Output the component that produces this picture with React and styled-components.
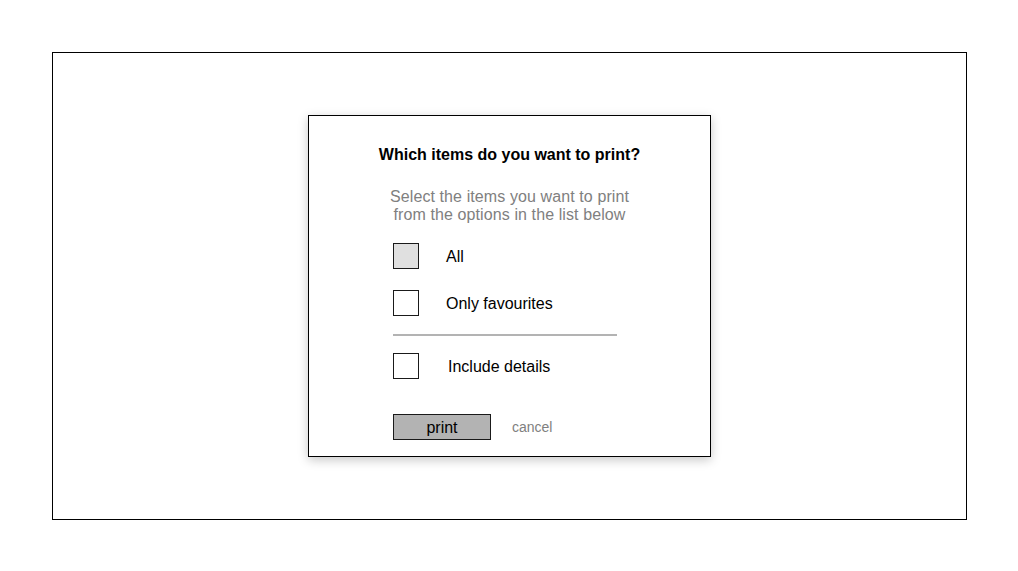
import React from "react";
import styled, { createGlobalStyle } from "styled-components";

const Global = createGlobalStyle`
  html, body {
    margin: 0;
    padding: 0;
    background: #ffffff;
  }
  body {
    font-family: "Liberation Sans", Arial, Helvetica, sans-serif;
    color: #000;
  }
`;

const Page = styled.div`
  width: 1018px;
  height: 571px;
  padding: 52px 0 0 52px;
  box-sizing: border-box;
`;

const Frame = styled.div`
  width: 915px;
  height: 468px;
  box-sizing: border-box;
  border: 1px solid #000;
  display: flex;
  align-items: center;
  justify-content: center;
`;

const Dialog = styled.div`
  width: 403px;
  height: 342px;
  box-sizing: border-box;
  border: 1px solid #000;
  background: #fff;
  box-shadow: 0 3px 10px rgba(0, 0, 0, 0.22);
  padding: 30px 0 0 0;
  display: flex;
  flex-direction: column;
`;

const Title = styled.div`
  font-size: 16px;
  font-weight: bold;
  line-height: 18px;
  text-align: center;
`;

const Subtitle = styled.div`
  margin-top: 24px;
  font-size: 16px;
  line-height: 18px;
  letter-spacing: 0.1px;
  color: #808080;
  text-align: center;
`;

const Options = styled.div`
  margin-top: 19px;
  padding-left: 84px;
  display: flex;
  flex-direction: column;
`;

const Row = styled.label`
  display: flex;
  align-items: center;
  height: 26px;
  margin-top: ${(p) => p.$gap || 0}px;
`;

const Box = styled.span`
  width: 26px;
  height: 26px;
  box-sizing: border-box;
  border: 1px solid #1a1a1a;
  background: ${(p) => (p.$filled ? "#e0e0e0" : "#ffffff")};
  flex: none;
`;

const Label = styled.span`
  margin-left: ${(p) => 27 + (p.$shift || 0)}px;
  padding-top: 2px;
  font-size: 16px;
  line-height: 18px;
`;

const Separator = styled.div`
  margin-top: 18px;
  margin-bottom: 17px;
  width: 224px;
  height: 2px;
  background: #b3b3b3;
`;

const Actions = styled.div`
  margin-top: 35px;
  display: flex;
  align-items: center;
`;

const PrintButton = styled.button`
  width: 98px;
  height: 26px;
  box-sizing: border-box;
  border: 1px solid #1a1a1a;
  background: #b3b3b3;
  font-family: "Liberation Sans", Arial, sans-serif;
  font-size: 16px;
  line-height: 18px;
  color: #000;
  padding: 2px 0 0 0;
  margin: 0;
  cursor: pointer;
`;

const Cancel = styled.span`
  margin-left: 21px;
  font-size: 14px;
  color: #808080;
`;

export default function App() {
  return (
    <>
      <Global />
      <Page>
        <Frame>
          <Dialog>
            <Title>Which items do you want to print?</Title>
            <Subtitle>
              Select the items you want to print
              <br />
              from the options in the list below
            </Subtitle>
            <Options>
              <Row>
                <Box $filled />
                <Label>All</Label>
              </Row>
              <Row $gap={21}>
                <Box />
                <Label>Only favourites</Label>
              </Row>
              <Separator />
              <Row>
                <Box />
                <Label $shift={2}>Include details</Label>
              </Row>
              <Actions>
                <PrintButton>print</PrintButton>
                <Cancel>cancel</Cancel>
              </Actions>
            </Options>
          </Dialog>
        </Frame>
      </Page>
    </>
  );
}
